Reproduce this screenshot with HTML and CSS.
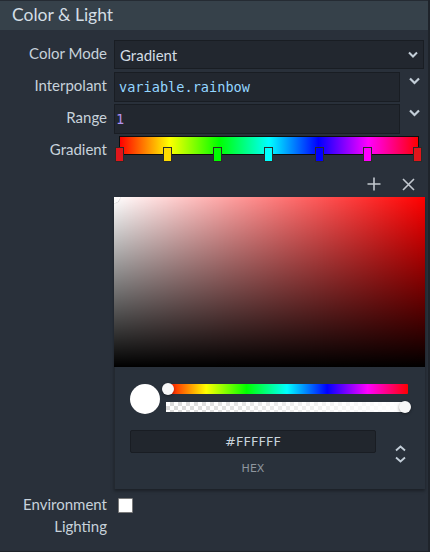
FILE: index.html
```html
<!DOCTYPE html>
<html>
<head>
<meta charset="utf-8">
<link rel="stylesheet" href="styles.css">
</head>
<body>
<div class="panel">
  <div class="header">Color &amp; Light</div>
  <div class="form">
    <div class="label">Color Mode</div>
    <div class="select">
      <span>Gradient</span>
      <svg class="chev" width="10" height="7" viewBox="0 0 10 7"><path d="M1 1.5 L5 5.5 L9 1.5" fill="none" stroke="#c3ced8" stroke-width="2"/></svg>
    </div>

    <div class="label">Interpolant</div>
    <div class="inrow">
      <div class="input code">variable.rainbow</div>
      <svg class="chev2" width="11" height="8" viewBox="0 0 11 8"><path d="M1 1.5 L5.5 6 L10 1.5" fill="none" stroke="#c3ced8" stroke-width="2.2"/></svg>
    </div>

    <div class="label">Range</div>
    <div class="inrow">
      <div class="input code num">1</div>
      <svg class="chev2" width="11" height="8" viewBox="0 0 11 8"><path d="M1 1.5 L5.5 6 L10 1.5" fill="none" stroke="#c3ced8" stroke-width="2.2"/></svg>
    </div>

    <div class="label">Gradient</div>
    <div class="gradwrap">
      <div class="gradbar"></div>
      <span class="stop" style="left:-1.33%;background:#e0161b"></span>
      <span class="stop" style="left:14.67%;background:#ffdc00"></span>
      <span class="stop" style="left:31.33%;background:#00ff00"></span>
      <span class="stop" style="left:48.33%;background:#00ffff"></span>
      <span class="stop" style="left:65.33%;background:#0000ff"></span>
      <span class="stop" style="left:81.33%;background:#ff00ff"></span>
      <span class="stop" style="left:98%;background:#e0161b"></span>
    </div>

    <div></div>
    <div class="tools">
      <svg width="14" height="14" viewBox="0 0 14 14"><path d="M7 0.5 V13.5 M0.5 7 H13.5" stroke="#c3c9d0" stroke-width="1.6"/></svg>
      <svg width="13" height="13" viewBox="0 0 13 13"><path d="M1 1 L12 12 M12 1 L1 12" stroke="#c3c9d0" stroke-width="1.6"/></svg>
    </div>

    <div></div>
    <div class="picker">
      <div class="sat"><span class="satthumb"></span></div>
      <div class="controls">
        <div class="swatch"></div>
        <div class="bars">
          <div class="hue"><span class="thumb hthumb"></span></div>
          <div class="alpha"><span class="thumb athumb"></span></div>
        </div>
      </div>
      <div class="hexrow">
        <div class="hexcol">
          <div class="hexinput">#FFFFFF</div>
          <div class="hexlabel">HEX</div>
        </div>
        <div class="toggle">
          <svg width="11" height="7" viewBox="0 0 11 7"><path d="M1 5.5 L5.5 1.5 L10 5.5" fill="none" stroke="#c3ced8" stroke-width="1.8"/></svg>
          <svg width="11" height="7" viewBox="0 0 11 7"><path d="M1 1.5 L5.5 5.5 L10 1.5" fill="none" stroke="#c3ced8" stroke-width="1.8"/></svg>
        </div>
      </div>
    </div>

    <div class="label env">Environment<br>Lighting</div>
    <div class="checkrow"><span class="checkbox"></span></div>
  </div>
</div>
</body>
</html>
```
FILE: styles.css
```css
html, body {
  margin: 0;
  padding: 0;
  background: #1f242b;
}
body {
  width: 430px;
  height: 552px;
  overflow: hidden;
  font-family: Lato, "Open Sans", sans-serif;
}
.panel {
  width: 428px;
  height: 551px;
  background: #29303a;
}
.header {
  height: 30px;
  box-sizing: border-box;
  border-top: 1px solid #252b33;
  background: #36414a;
  color: #d3dde5;
  font-size: 17.5px;
  line-height: 28px;
  padding-left: 12px;
}
.form {
  display: grid;
  grid-template-columns: 107px 311px;
  column-gap: 7px;
  padding-top: 10px;
}
.label {
  color: #c7d2db;
  font-size: 15px;
  text-align: right;
  line-height: 27px;
  height: 29px;
}
.select {
  height: 29px;
  box-sizing: border-box;
  background: #22272f;
  border: 1px solid #191d23;
  display: flex;
  align-items: center;
  padding: 0 0 0 5px;
  width: 310px;
  color: #d3dce4;
  font-size: 15px;
  margin-bottom: 3px;
}
.select span { flex: 1; }
.chev { margin-right: 5px; }
.inrow {
  display: flex;
  height: 30px;
  margin-bottom: 2px;
}
.input {
  width: 286px;
  height: 30px;
  box-sizing: border-box;
  background: #22272f;
  border: 1px solid #191d23;
  padding-left: 4px;
  line-height: 28px;
}
.code {
  font-family: "DejaVu Sans Mono", "Liberation Mono", monospace;
  font-size: 13.6px;
  color: #94d6ff;
}
.num {
  color: #b292ee;
  padding-left: 1px;
}
.chev2 {
  margin: 5px 0 0 9px;
}
.gradwrap {
  position: relative;
  height: 27px;
  width: 300px;
  margin-left: 5px;
}
.gradbar {
  width: 300px;
  height: 19px;
  box-sizing: border-box;
  border: 1px solid #0d0d0d;
  background: linear-gradient(to right, #ff0000, #ffff00 16.6%, #00ff00 33.3%, #00ffff 50%, #0000ff 66.6%, #ff00ff 83.3%, #ff0000);
}
.stop {
  position: absolute;
  top: 11px;
  width: 9px;
  height: 15px;
  box-sizing: border-box;
  border: 1px solid #2a2a2a;
}
.tools {
  display: flex;
  justify-content: flex-end;
  gap: 21px;
  padding: 6px 10px 0 0;
  height: 32px;
  box-sizing: border-box;
  align-items: center;
}
.picker {
  width: 311px;
  height: 292px;
  box-sizing: border-box;
  background: #29313b;
  border-left: 1px solid #232930;
  box-shadow: 0 2px 3px rgba(0,0,0,0.35);
  margin-bottom: 9px;
}
.sat {
  position: relative;
  overflow: hidden;
  height: 170px;
  margin-left: -1px;
  background:
    linear-gradient(to bottom, rgba(0,0,0,0), #000),
    linear-gradient(to right, #fff, rgba(255,255,255,0)),
    #ff0000;
}
.satthumb {
  position: absolute;
  left: -6px;
  top: -6px;
  width: 10px;
  height: 10px;
  border-radius: 50%;
  border: 1px solid #fff;
  box-shadow: 0 0 1px rgba(0,0,0,0.6);
}
.controls {
  display: flex;
  padding: 17px 16px 0 15px;
  gap: 6px;
}
.swatch {
  width: 30px;
  height: 30px;
  border-radius: 50%;
  background: #fff;
}
.bars {
  width: 242px;
  display: flex;
  flex-direction: column;
  gap: 8px;
}
.hue, .alpha {
  position: relative;
  height: 10px;
}
.hue {
  background: linear-gradient(to right, #ff0000, #ffff00 16.6%, #00ff00 33.3%, #00ffff 50%, #0000ff 66.6%, #ff00ff 83.3%, #ff0000);
  border-radius: 1px;
}
.alpha {
  background:
    linear-gradient(to right, rgba(255,255,255,0), #fff),
    repeating-conic-gradient(#d9d9d9 0 25%, #ffffff 0 50%) 0 0 / 8px 8px;
}
.thumb {
  position: absolute;
  top: -1px;
  width: 12px;
  height: 12px;
  border-radius: 50%;
  background: #f8f8f8;
  box-shadow: 0 1px 3px rgba(0,0,0,0.4);
}
.hthumb { left: -4px; }
.athumb { right: -3px; }
.hexrow {
  display: flex;
  padding: 16px 0 0 15px;
}
.hexcol {
  width: 246px;
  display: flex;
  flex-direction: column;
  align-items: center;
}
.hexinput {
  width: 246px;
  height: 23px;
  box-sizing: border-box;
  background: #21262d;
  border: 1px solid #191d23;
  border-radius: 2px;
  color: #c9d3dc;
  font-family: "DejaVu Sans", sans-serif;
  font-size: 13px;
  text-align: center;
  line-height: 21px;
}
.hexlabel {
  margin-top: 9px;
  color: #8e969e;
  font-family: "DejaVu Sans", sans-serif;
  font-size: 11px;
}
.toggle {
  display: flex;
  flex-direction: column;
  gap: 4px;
  margin: 15px 0 0 19px;
}
.env {
  height: auto;
  line-height: 22px;
  margin-top: -5px;
}
.checkrow {
  padding: 0 0 0 4px;
}
.checkbox {
  display: block;
  width: 15px;
  height: 15px;
  box-sizing: border-box;
  background: #fff;
  border: 1px solid #7a7a7a;
  border-radius: 1px;
}
```
